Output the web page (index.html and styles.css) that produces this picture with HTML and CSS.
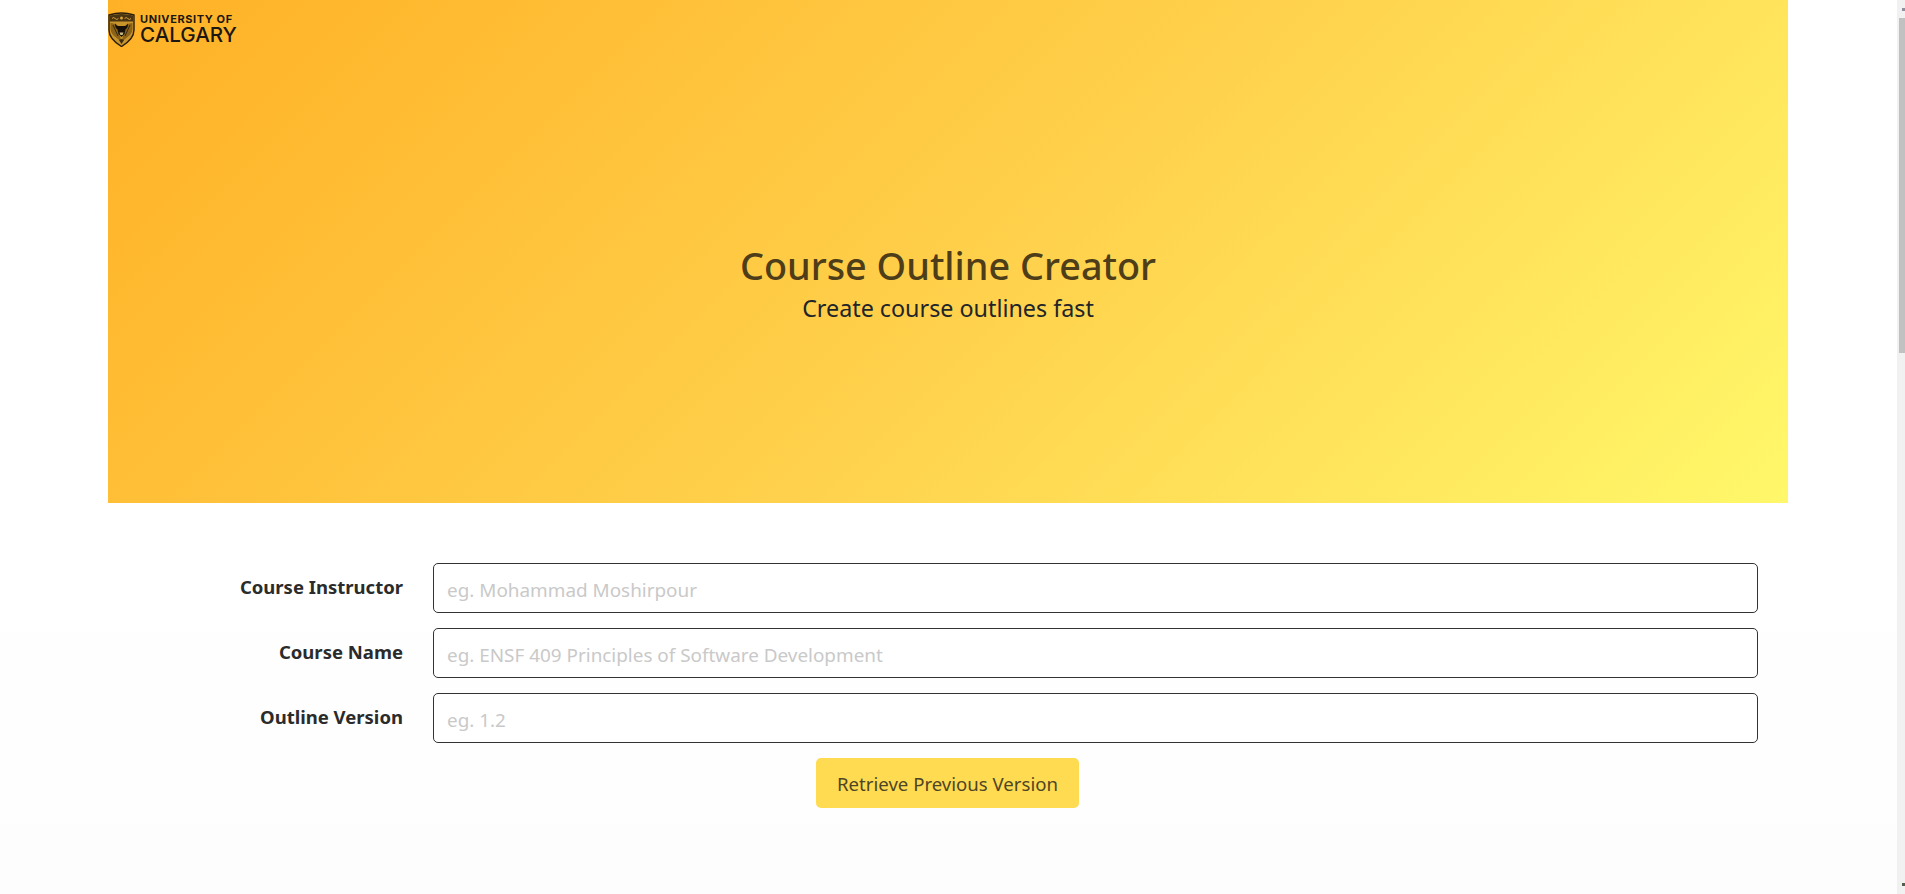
FILE: index.html
```html
<!DOCTYPE html>
<html lang="en">
<head>
<meta charset="utf-8">
<title>Course Outline Creator</title>
<link rel="stylesheet" href="styles.css">
</head>
<body>
<div class="page">
  <main class="content">
    <header class="hero">
      <div class="logo">
        <svg class="crest" viewBox="0 0 27 35" width="27" height="35" aria-hidden="true">
          <path d="M1 3 Q13.5 -1 26 3 V18 Q26 27 13.5 34.5 Q1 27 1 18 Z" fill="#c8942c" stroke="#2a1e0c" stroke-width="1.4"/>
          <path d="M2 3.6 Q13.5 .4 25 3.6 V9.5 H2 Z" fill="#4a3512"/>
          <path d="M4 6.5 q1.6 -2 3.2 0 q1.6 2 3.2 0 M16.6 6.5 q1.6 -2 3.2 0 q1.6 2 3.2 0" fill="none" stroke="#d6a33a" stroke-width="1"/>
          <circle cx="13.5" cy="6" r="1.5" fill="#d6a33a"/>
          <path d="M2.5 11 L8 12 L12.5 26 L13.5 30 L5 23 Q2.5 20 2.5 17 Z M24.5 11 L19 12 L14.5 26 L13.5 30 L22 23 Q24.5 20 24.5 17 Z" fill="#8a6218"/>
          <path d="M5 13 L10 24 M22 13 L17 24" stroke="#3a2a10" stroke-width="1" fill="none"/>
          <path d="M7 11.5 Q9 14 10.5 14 H16.5 Q18 14 20 11.5 Q20 16 17.5 17.5 L16.5 22 L13.5 25 L10.5 22 L9.5 17.5 Q7 16 7 11.5 Z" fill="#15110a"/>
          <path d="M11.5 20.5 H15.5 L14.6 23 H12.4 Z" fill="#c9b98a"/>
          <path d="M13.5 27 L16 28 L13.5 32 L11 28 Z" fill="#3a2a10"/>
        </svg>
        <div class="wordmark">
          <span class="wm-top">UNIVERSITY OF</span>
          <span class="wm-main">CALGARY</span>
        </div>
      </div>
      <div class="hero-text">
        <h1>Course Outline Creator</h1>
        <p>Create course outlines fast</p>
      </div>
    </header>
    <form class="form">
      <div class="row">
        <label for="a">Course Instructor</label>
        <input id="a" type="text" placeholder="eg. Mohammad Moshirpour">
      </div>
      <div class="row">
        <label for="b">Course Name</label>
        <input id="b" type="text" placeholder="eg. ENSF 409 Principles of Software Development">
      </div>
      <div class="row">
        <label for="c">Outline Version</label>
        <input id="c" type="text" placeholder="eg. 1.2">
      </div>
      <div class="actions">
        <button type="button">Retrieve Previous Version</button>
      </div>
    </form>
  </main>
  <aside class="scrollbar"><span class="arrow arrow-up"></span><span class="thumb"></span><span class="arrow arrow-down"></span></aside>
</div>
</body>
</html>
```
FILE: styles.css
```css
* { box-sizing: border-box; }
html, body { margin: 0; height: 100%; overflow: hidden; }
body { font-family: "Noto Sans", "Open Sans", sans-serif; color: #212529; background: #fff; }
.page { display: flex; height: 894px; }
.content { flex: 1; padding: 0 109px 0 108px; background: linear-gradient(#fff 560px, #fdfdfd 100%); }
.hero { position: relative; height: 503px; display: flex; align-items: center; justify-content: center; background: linear-gradient(135deg, #ffb126 0%, #ffd24d 55%, #fff86a 100%); }
.logo { position: absolute; left: 0; top: 12px; display: flex; align-items: flex-start; gap: 5px; }
.crest { display: block; width: 27px; height: 35px; }
.wordmark { display: flex; flex-direction: column; color: #1c1710; font-family: Inter, "Liberation Sans", sans-serif; padding-top: 2px; }
.wm-top { font-size: 11px; font-weight: 700; letter-spacing: .6px; line-height: 11px; white-space: nowrap; }
.wm-main { font-size: 20.6px; font-weight: 500; line-height: 19px; white-space: nowrap; }
.hero-text { text-align: center; padding-top: 62px; }
h1 { margin: 0; font-size: 37.8px; font-weight: 500; line-height: 48px; color: #4d3d18; }
.hero-text p { margin: 3px 0 0; font-size: 23.3px; line-height: 30px; color: #212529; }
.form { padding-top: 60px; }
.row { display: flex; align-items: flex-start; margin-bottom: 15px; }
label { width: 295px; padding: 12px 0 0 0; flex: none; text-align: right; font-size: 18.5px; font-weight: 700; color: #2b2b2b; line-height: 24px; }
input { display: block; margin-left: 30px; width: 1325px; height: 50px; padding: 4px 13px 0; border: 1px solid #333; border-radius: 5px; background: #fff; font: inherit; font-size: 18.9px; outline: none; }
input::placeholder { color: #c9c9c9; opacity: 1; }
.actions { display: flex; justify-content: center; }
button { width: 263px; height: 50px; margin-right: 1px; border: 0; border-radius: 5px; background: #ffdb52; color: #4f4524; font: inherit; font-size: 18.6px; }
.scrollbar { position: relative; flex: none; width: 8px; background: #f1f1f1; }
.arrow { position: absolute; right: 0; width: 3px; height: 3px; background: #8f8f9f; }
.arrow-up { top: 8px; }
.arrow-down { bottom: 8px; background: #50604a; }
.thumb { position: absolute; top: 18px; right: 0; width: 6px; height: 335px; background: #c1c1c1; }
```
